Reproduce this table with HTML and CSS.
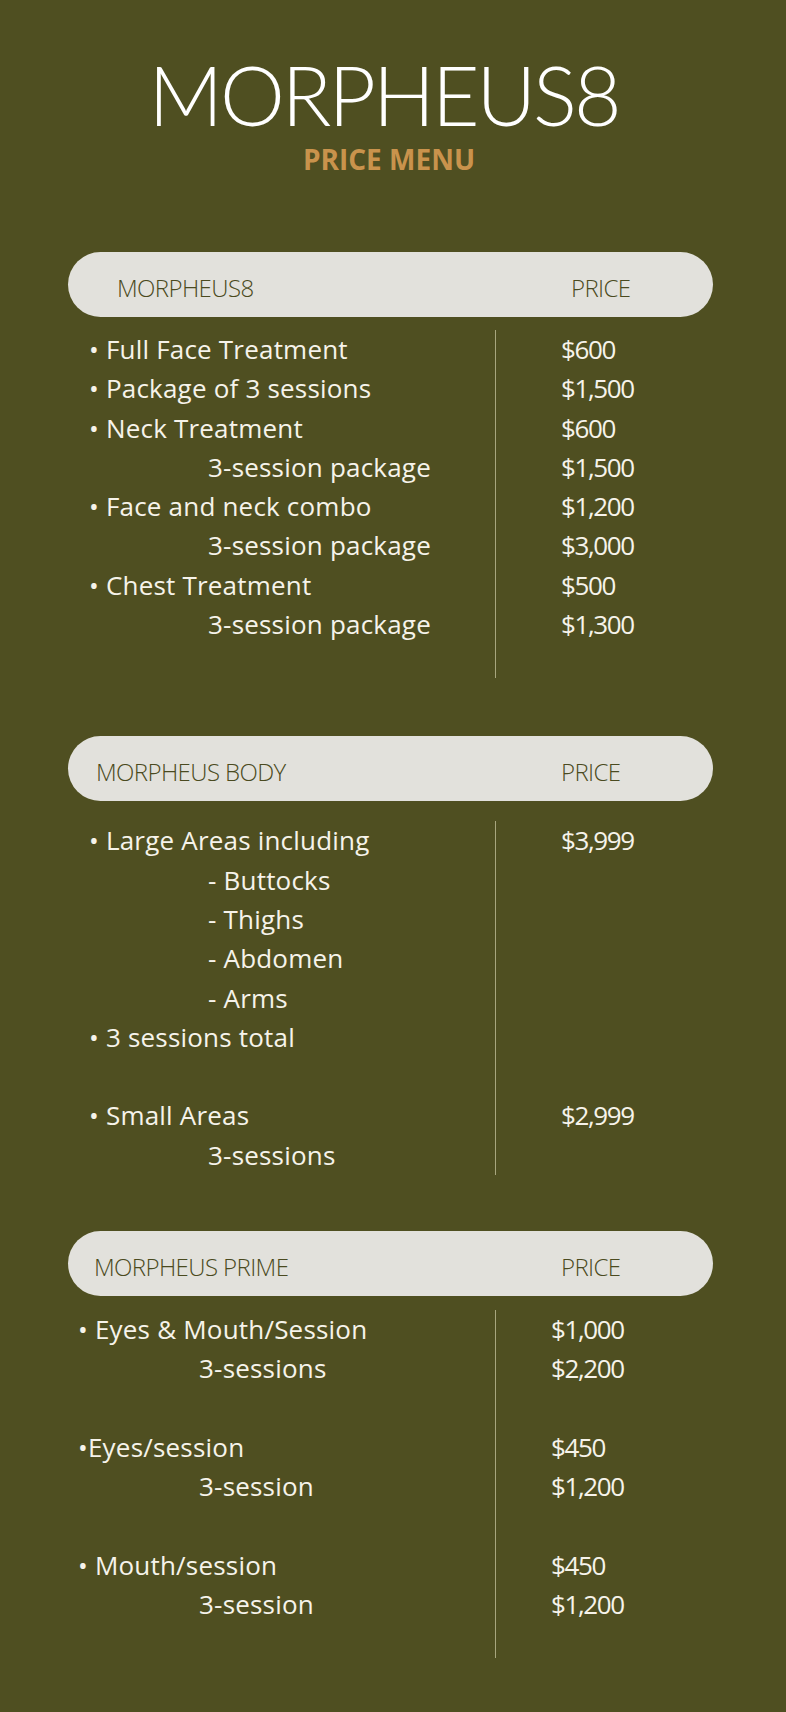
FILE: index.html
```html
<!DOCTYPE html>
<html>
<head>
<meta charset="utf-8">
<link rel="stylesheet" href="styles.css">
</head>
<body>
<main class="page">
  <header class="masthead">
    <h1 class="title">MORPHEUS8</h1>
    <p class="subtitle">PRICE MENU</p>
  </header>

  <section class="menu menu-one">
    <div class="bar">
      <span class="bar-name">MORPHEUS8</span>
      <span class="bar-price">PRICE</span>
    </div>
    <div class="body">
      <ul class="items">
        <li>• Full Face Treatment</li>
        <li>• Package of 3 sessions</li>
        <li>• Neck Treatment</li>
        <li class="sub">3-session package</li>
        <li>• Face and neck combo</li>
        <li class="sub">3-session package</li>
        <li>• Chest Treatment</li>
        <li class="sub">3-session package</li>
      </ul>
      <ul class="prices">
        <li>$600</li>
        <li>$1,500</li>
        <li>$600</li>
        <li>$1,500</li>
        <li>$1,200</li>
        <li>$3,000</li>
        <li>$500</li>
        <li>$1,300</li>
      </ul>
    </div>
  </section>

  <section class="menu menu-two">
    <div class="bar">
      <span class="bar-name">MORPHEUS BODY</span>
      <span class="bar-price">PRICE</span>
    </div>
    <div class="body">
      <ul class="items">
        <li>• Large Areas including</li>
        <li class="sub">- Buttocks</li>
        <li class="sub">- Thighs</li>
        <li class="sub">- Abdomen</li>
        <li class="sub">- Arms</li>
        <li>• 3 sessions total</li>
        <li class="blank"></li>
        <li>• Small Areas</li>
        <li class="sub">3-sessions</li>
      </ul>
      <ul class="prices">
        <li>$3,999</li>
        <li class="blank"></li>
        <li class="blank"></li>
        <li class="blank"></li>
        <li class="blank"></li>
        <li class="blank"></li>
        <li class="blank"></li>
        <li>$2,999</li>
        <li class="blank"></li>
      </ul>
    </div>
  </section>

  <section class="menu menu-three">
    <div class="bar">
      <span class="bar-name">MORPHEUS PRIME</span>
      <span class="bar-price">PRICE</span>
    </div>
    <div class="body">
      <ul class="items">
        <li>• Eyes &amp; Mouth/Session</li>
        <li class="sub">3-sessions</li>
        <li class="blank"></li>
        <li>•Eyes/session</li>
        <li class="sub">3-session</li>
        <li class="blank"></li>
        <li>• Mouth/session</li>
        <li class="sub">3-session</li>
      </ul>
      <ul class="prices">
        <li>$1,000</li>
        <li>$2,200</li>
        <li class="blank"></li>
        <li>$450</li>
        <li>$1,200</li>
        <li class="blank"></li>
        <li>$450</li>
        <li>$1,200</li>
      </ul>
    </div>
  </section>
</main>
</body>
</html>
```

FILE: styles.css
```css
html, body {
  margin: 0;
  padding: 0;
}

body {
  background: #4f4f21;
  font-family: "Open Sans", "Lato", sans-serif;
  color: #f6f3ea;
  width: 786px;
  min-height: 1712px;
}

.page {
  display: flex;
  flex-direction: column;
  padding-top: 46px;
}

.masthead {
  display: flex;
  flex-direction: column;
  align-items: center;
}

.title {
  margin: 0 19px 0 0;
  font-family: "Lato", "Open Sans", sans-serif;
  font-weight: 300;
  font-size: 82px;
  line-height: 96px;
  letter-spacing: -3px;
  color: #ffffff;
}

.subtitle {
  margin: 0 8px 0 0;
  font-weight: 700;
  font-size: 28px;
  line-height: 34px;
  letter-spacing: 0;
  color: #c9934c;
}

.menu {
  display: flex;
  flex-direction: column;
}

.menu-one { margin-top: 76px; }
.menu-two { margin-top: 58px; }
.menu-three { margin-top: 56px; }

.bar {
  margin-left: 68px;
  width: 645px;
  height: 65px;
  border-radius: 33px;
  background: #e2e1dc;
  display: flex;
  align-items: center;
  color: #4a4a20;
  font-weight: 300;
  font-size: 24px;
  letter-spacing: -0.6px;
  padding-top: 5px;
  box-sizing: border-box;
}

.bar-name { width: 0; flex: 1; }

.menu-one .bar-name { padding-left: 49px; }
.menu-one .bar-price { width: 142px; }
.menu-two .bar-name { padding-left: 28px; }
.menu-two .bar-price { width: 152px; }
.menu-three .bar-name { padding-left: 26px; }
.menu-three .bar-price { width: 152px; }

.body {
  display: flex;
  margin-top: 13px;
}

.menu-two .body { margin-top: 20px; }
.menu-three .body { margin-top: 14px; }

.items, .prices {
  list-style: none;
  margin: 0;
  padding: 0;
  font-size: 26px;
  line-height: 39.3px;
  letter-spacing: 0.2px;
  font-weight: 400;
}

.items li, .prices li {
  height: 39.3px;
  white-space: nowrap;
}

.items {
  width: 406px;
  padding-left: 89px;
  border-right: 1px solid #a8a67e;
  padding-bottom: 34px;
}

.menu-two .items { padding-bottom: 0; }

.items .sub { padding-left: 119px; }

.prices { padding-left: 65px; letter-spacing: -1.4px; }

.menu-three .items { padding-left: 78px; width: 417px; }
.menu-three .items .sub { padding-left: 121px; }
.menu-three .prices { padding-left: 55px; }
```
